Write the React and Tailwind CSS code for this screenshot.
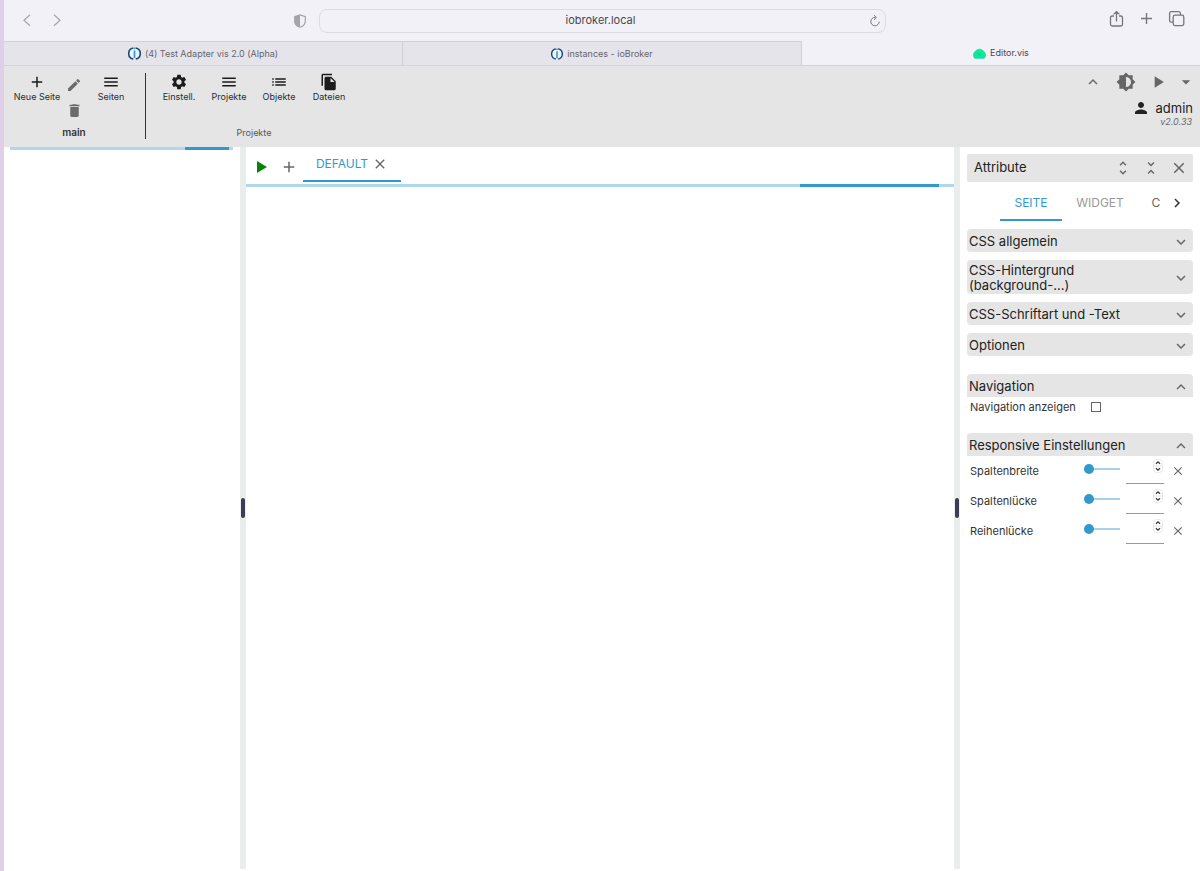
import { useState } from "react";
import clsx from "clsx";
import {
  MdAdd,
  MdArrowDropDown,
  MdBrightness6,
  MdChevronRight,
  MdClose,
  MdDelete,
  MdEdit,
  MdExpandLess,
  MdExpandMore,
  MdFileCopy,
  MdList,
  MdMenu,
  MdPerson,
  MdPlayArrow,
  MdSettings,
  MdUnfoldLess,
  MdUnfoldMore,
} from "react-icons/md";

const browserTabs = [
  { label: "(4) Test Adapter vis 2.0 (Alpha)", icon: "broker" },
  { label: "instances - ioBroker", icon: "brokerSmall" },
  { label: "Editor.vis", icon: "vis", active: true },
];

const projectTools = [
  { icon: MdSettings, label: "Einstell." },
  { icon: MdMenu, label: "Projekte" },
  { icon: MdList, label: "Objekte" },
  { icon: MdFileCopy, label: "Dateien" },
];

const cssGroups = [
  "CSS allgemein",
  "CSS-Hintergrund (background-...)",
  "CSS-Schriftart und -Text",
  "Optionen",
];

const responsiveFields = [
  { id: "columnWidth", label: "Spaltenbreite" },
  { id: "columnGap", label: "Spaltenlücke" },
  { id: "rowGap", label: "Reihenlücke" },
];

const Favicon = ({ type }) => {
  if (type === "vis") {
    return (
      <svg width="13" height="11" viewBox="0 0 13 11">
        <path d="M1.6 10.3A5.8 5.8 0 1 1 11.4 10.3Z" fill="#06ee93" stroke="#3fc7b0" strokeWidth="0.8" strokeLinejoin="round" />
        <path d="M4.6 5.2 7.8 7.4" stroke="#16b97a" strokeWidth="0.8" />
      </svg>
    );
  }
  return (
    <svg
      width={type === "broker" ? 13 : 12}
      height={type === "broker" ? 13 : 12}
      viewBox="0 0 26 26"
      fill="none"
    >
      <circle cx="13" cy="13" r="11.4" fill="#eef3f8" />
      <path d="M10.6 1.9A11.3 11.3 0 0 0 10.6 24.1M15.4 1.9A11.3 11.3 0 0 1 15.4 24.1" stroke="#164477" strokeWidth="3" />
      <path d="M13 1v3.5M13 7v15" stroke="#3399cc" strokeWidth="3.4" />
    </svg>
  );
};

const BrowserBar = () => (
  <header className="flex h-[41px] items-center bg-[#f2f1f7] text-[#77767c]">
    <div className="flex flex-1 items-center pl-4 pr-3">
      <button type="button" aria-label="Zurück" className="text-[#a9a8ae]">
        <svg width="15" height="15" viewBox="0 0 15 15" fill="none" stroke="currentColor" strokeWidth="1.3">
          <path d="M10 1.8 4 7.3 10 12.8" />
        </svg>
      </button>
      <button type="button" aria-label="Vorwärts" className="ml-[14px] text-[#a9a8ae]">
        <svg width="15" height="15" viewBox="0 0 15 15" fill="none" stroke="currentColor" strokeWidth="1.3">
          <path d="M5 1.8 11 7.3 5 12.8" />
        </svg>
      </button>
      <button type="button" aria-label="Datenschutz" className="ml-auto text-[#a5a4aa]">
        <svg width="14" height="14" viewBox="0 0 14 14">
          <path d="M7 .9 12.3 2.6V7.4C12.3 10.5 9.6 12.2 7 13.2 4.4 12.2 1.7 10.5 1.7 7.4V2.6Z" fill="none" stroke="currentColor" strokeWidth="1.2" />
          <path d="M7 .9V13.2C4.4 12.2 1.7 10.5 1.7 7.4V2.6Z" fill="currentColor" />
        </svg>
      </button>
    </div>
    <div className="mr-3 flex h-6 w-[567px] items-center rounded-lg border border-[#dcdbe1] pl-1 pr-1">
      <input
        type="text"
        aria-label="Adresse"
        defaultValue="iobroker.local"
        className="min-w-0 flex-1 bg-transparent pl-2 text-center text-[11px] text-[#48474c] outline-none"
      />
      <button type="button" aria-label="Neu laden">
        <svg width="12" height="14" viewBox="0 0 12 14" fill="none" stroke="currentColor">
          <path d="M6.4 3.4A4.2 4.2 0 1 0 10.2 7.6M5 1.2 7.4 3.5 5 5.8" />
        </svg>
      </button>
    </div>
    <div className="flex flex-1 items-center justify-end gap-[14px] pb-1 pr-[15px]">
      <button type="button" aria-label="Teilen">
        <svg width="17" height="18" viewBox="0 0 17 18" fill="none" stroke="currentColor" strokeWidth="1.3">
          <path d="M6 6H4.2Q2.5 6 2.5 7.7V14.3Q2.5 16 4.2 16H12.8Q14.5 16 14.5 14.3V7.7Q14.5 6 12.8 6H11M8.5 11.5V1.8M5.6 4.4 8.5 1.6 11.4 4.4" />
        </svg>
      </button>
      <button type="button" aria-label="Neuer Tab">
        <svg width="15" height="15" viewBox="0 0 15 15" stroke="currentColor" strokeWidth="1.4">
          <path d="M7.5 2V13M2 7.5H13" />
        </svg>
      </button>
      <button type="button" aria-label="Tabübersicht">
        <svg width="17" height="17" viewBox="0 0 17 17" fill="none" stroke="currentColor" strokeWidth="1.3">
          <rect x="5.2" y="5.2" width="10.6" height="10.4" rx="1.8" />
          <path d="M5 12.2H3.4Q1.6 12.2 1.6 10.4V3.4Q1.6 1.6 3.4 1.6H10.6Q12.4 1.6 12.4 3.4V5" />
        </svg>
      </button>
    </div>
  </header>
);

const BrowserTabs = () => (
  <nav className="flex h-[25px] border-b border-[#d3d3d8] text-[9px]">
    {browserTabs.map((tab) => (
      <a
        key={tab.label}
        href="#"
        className={clsx(
          "flex flex-1 items-center justify-center gap-1",
          tab.active
            ? "bg-[#f2f1f7] text-[#48474c]"
            : "border-r border-t border-[#d0cfd6] bg-[#e5e4ea] text-[#66656b]"
        )}
      >
        <Favicon type={tab.icon} />
        <span>{tab.label}</span>
      </a>
    ))}
  </nav>
);

const ToolButton = ({ icon: Icon, label }) => (
  <button type="button" className="flex w-[50px] flex-col items-center text-[9px] leading-3 text-[#2c2c2c]">
    <Icon size={18} className="text-[#1c1c1c]" />
    <span className="whitespace-nowrap">{label}</span>
  </button>
);

const Toolbar = () => (
  <div className="flex h-[81px] bg-[#e5e5e5] pb-2 pt-[7px]">
    <div className="flex w-[142px] flex-col justify-between border-r border-[#333] pb-px pl-2">
      <div className="flex">
        <ToolButton icon={MdAdd} label="Neue Seite" />
        <div className="flex w-6 flex-col items-center gap-[9px] pt-1 text-[#6b6b6b]">
          <button type="button" aria-label="Seite bearbeiten">
            <MdEdit size={16} />
          </button>
          <button type="button" aria-label="Seite löschen">
            <MdDelete size={17} />
          </button>
        </div>
        <ToolButton icon={MdMenu} label="Seiten" />
      </div>
      <span className="w-[124px] text-center text-[10px] font-semibold leading-3 text-[#333]">main</span>
    </div>
    <div className="flex flex-col justify-between pl-2">
      <div className="flex">
        {projectTools.map((tool) => (
          <ToolButton key={tool.label} icon={tool.icon} label={tool.label} />
        ))}
      </div>
      <span className="text-center text-[9px] leading-3 text-[#555]">Projekte</span>
    </div>
    <div className="ml-auto flex flex-col items-end pr-[7px] text-[#666]">
      <div className="-mr-[3px] flex h-[18px] items-center">
        <button type="button" aria-label="Einklappen" className="mr-[14px]">
          <MdExpandLess size={18} />
        </button>
        <button type="button" aria-label="Helligkeit" className="mr-3">
          <MdBrightness6 size={20} />
        </button>
        <button type="button" aria-label="Starten" className="mr-2">
          <MdPlayArrow size={20} />
        </button>
        <button type="button" aria-label="Optionen">
          <MdArrowDropDown size={20} />
        </button>
      </div>
      <div className="mt-2 flex items-center gap-[6px] text-[13px] leading-4 text-[#222]">
        <MdPerson size={18} />
        <span>admin</span>
      </div>
      <span className="pr-px text-[9px] italic leading-[10px]">v2.0.33</span>
    </div>
  </div>
);

const Progress = ({ children, className }) => (
  <div className={clsx("flex h-[3px] justify-end bg-[#afd8ec]", className)}>{children}</div>
);

const Splitter = () => (
  <div className="flex w-[6px] shrink-0 items-center justify-center bg-[#e9eeed]">
    <span className="h-5 w-1 rounded-xs bg-[#3f3d56]" />
  </div>
);

const Group = ({ title, open }) => (
  <button
    type="button"
    aria-expanded={!!open}
    className={clsx(
      "flex min-h-[23px] w-full items-center justify-between bg-[#e5e5e5] pb-px pl-0.5 pr-[3px] pt-[3px] text-left text-[13px] leading-[15px] text-[#222]",
      open ? "rounded-t-sm" : "rounded-sm"
    )}
  >
    <span className="max-w-[160px]">{title}</span>
    {open ? (
      <MdExpandLess size={18} className="-my-px shrink-0 text-[#666]" />
    ) : (
      <MdExpandMore size={18} className="-my-px shrink-0 text-[#666]" />
    )}
  </button>
);

const SliderRow = ({ id, label }) => {
  const [value, setValue] = useState("");

  return (
    <div className="flex h-[30px] items-center pl-[3px] text-[11px] text-[#333]">
      <label htmlFor={id} className="flex-1">
        {label}
      </label>
      <input
        type="range"
        aria-label={label}
        value={value || 0}
        onChange={(e) => setValue(e.target.value)}
        className="mb-1 h-3 w-9 appearance-none bg-transparent [&::-webkit-slider-runnable-track]:h-0.5 [&::-webkit-slider-runnable-track]:bg-[#a6d3ea] [&::-webkit-slider-thumb]:-mt-1 [&::-webkit-slider-thumb]:h-[10px] [&::-webkit-slider-thumb]:w-[10px] [&::-webkit-slider-thumb]:appearance-none [&::-webkit-slider-thumb]:rounded-full [&::-webkit-slider-thumb]:bg-[#3399cc]"
      />
      <div className="ml-[6px] flex h-[25px] w-[38px] border-b border-[#999]">
        <input
          id={id}
          type="text"
          inputMode="numeric"
          value={value}
          onChange={(e) => setValue(e.target.value)}
          className="w-[27px] bg-transparent text-[11px] outline-none"
        />
        <svg width="10" height="14" viewBox="0 0 9 13" fill="none">
          <rect x="0.4" y="0.4" width="8.2" height="12.2" rx="3.8" fill="#fff" stroke="#ddd" strokeWidth="0.7" />
          <path d="M0.5 6.5H8.5" stroke="#ddd" strokeWidth="0.7" />
          <path d="M2.6 4.4 4.5 2.7 6.4 4.4M2.6 8.6 4.5 10.3 6.4 8.6" stroke="#333" strokeWidth="1.1" />
        </svg>
      </div>
      <button type="button" aria-label={`${label} löschen`} className="ml-[7px] mr-2 text-[#666]">
        <MdClose size={14} />
      </button>
    </div>
  );
};

const AttributesPanel = () => (
  <aside className="w-60 shrink-0 px-[7px] pt-[7px]">
    <div className="flex h-7 items-center rounded-xs bg-[#e5e5e5] pl-[7px] pr-[5px] text-[#666]">
      <h2 className="mr-auto text-[13px] text-[#222]">Attribute</h2>
      <div className="flex items-center gap-[10px]">
        <button type="button" aria-label="Alle öffnen">
          <MdUnfoldMore size={18} />
        </button>
        <button type="button" aria-label="Alle schließen">
          <MdUnfoldLess size={18} />
        </button>
        <button type="button" aria-label="Schließen">
          <MdClose size={18} />
        </button>
      </div>
    </div>
    <div className="mt-[3px] flex h-9 items-stretch pl-[33px] text-[12px]">
      <button type="button" className="w-[62px] border-b-2 border-[#3399cc] pt-0.5 text-[#3399cc]">
        SEITE
      </button>
      <button type="button" className="w-[76px] text-[#999]">
        WIDGET
      </button>
      <button type="button" className="flex-1 overflow-hidden pl-[6px] text-[#666]">
        C
      </button>
      <button type="button" aria-label="Weiter" className="mr-[7px] text-[#333]">
        <MdChevronRight size={18} />
      </button>
    </div>
    <div className="mt-2 flex flex-col gap-2">
      {cssGroups.map((title) => (
        <Group key={title} title={title} />
      ))}
    </div>
    <div className="mt-[18px]">
      <Group title="Navigation" open />
      <div className="flex h-5 items-center pl-[3px] text-[11px] text-[#333]">
        <label htmlFor="showNavigation" className="w-[121px]">
          Navigation anzeigen
        </label>
        <input
          id="showNavigation"
          type="checkbox"
          className="h-[10px] w-[10px] appearance-none border border-[#666] checked:bg-[#3399cc]"
        />
      </div>
    </div>
    <div className="mt-4">
      <Group title="Responsive Einstellungen" open />
      {responsiveFields.map((field) => (
        <SliderRow key={field.id} id={field.id} label={field.label} />
      ))}
    </div>
  </aside>
);

const Workspace = () => (
  <main className="min-w-0 flex-1">
    <div className="flex h-[37px] items-start pl-[9px]">
      <button type="button" aria-label="Ansicht starten" className="mt-[14px] text-[#068406]">
        <svg width="14" height="12" viewBox="0 0 14 12">
          <path d="M2 0V12L12 6Z" fill="currentColor" />
        </svg>
      </button>
      <button type="button" aria-label="Ansicht hinzufügen" className="ml-[11px] mt-[11px] text-[#666]">
        <MdAdd size={18} />
      </button>
      <div className="ml-[5px] flex h-[35px] w-[98px] items-center justify-center gap-1 border-b-2 border-[#3399cc]">
        <button type="button" className="text-[12px] text-[#3399cc]">
          DEFAULT
        </button>
        <button type="button" aria-label="Ansicht schließen" className="text-[#666]">
          <MdClose size={16} />
        </button>
      </div>
    </div>
    <Progress className="pr-[15px]">
      <span className="w-[20%] bg-[#3399cc]" />
    </Progress>
  </main>
);

const App = () => (
  <div className="flex min-h-screen flex-col border-l-4 border-[#e0cfe8] bg-white font-[Inter,sans-serif]">
    <BrowserBar />
    <BrowserTabs />
    <Toolbar />
    <div className="flex flex-1 pb-0.5">
      <aside className="w-[236px] shrink-0 pl-[6px] pr-[7px]">
        <Progress className="pr-1">
          <span className="w-1/5 bg-[#3399cc]" />
        </Progress>
      </aside>
      <Splitter />
      <Workspace />
      <Splitter />
      <AttributesPanel />
    </div>
  </div>
);

export default App;
